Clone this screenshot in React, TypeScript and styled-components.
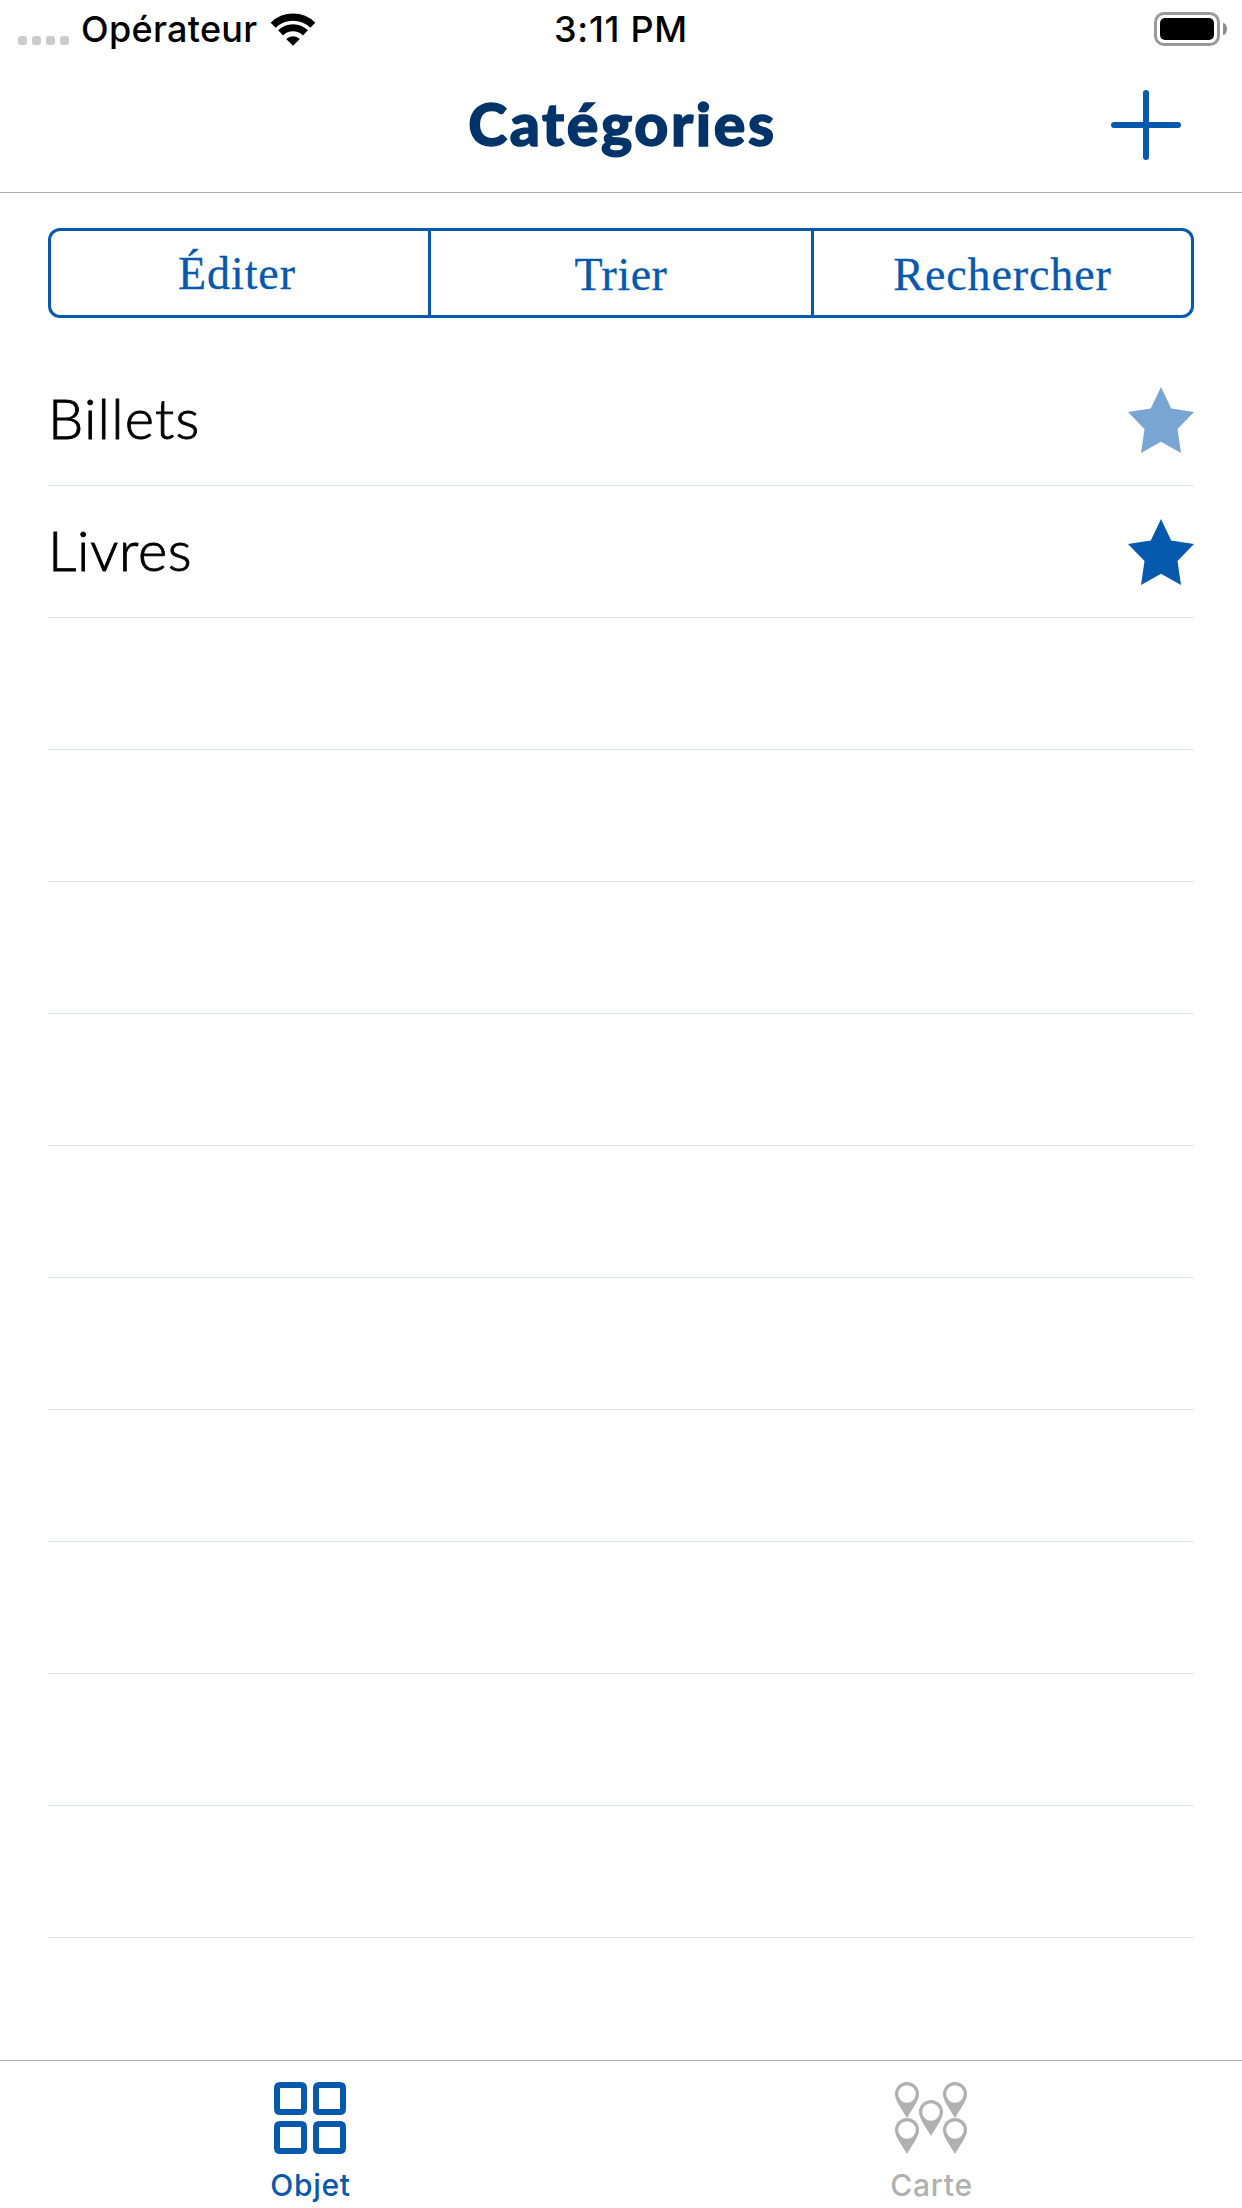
import React from "react";
import styled, { createGlobalStyle } from "styled-components";

const BLUE = "#0759ad";
const NAVY = "#023469";
const GREY = "#b0b0b0";

const GlobalStyle = createGlobalStyle`
  * { box-sizing: border-box; }
  body { margin: 0; background: #fff; }
`;

const Screen = styled.div`
  display: flex;
  flex-direction: column;
  width: 1242px;
  height: 2208px;
  overflow: hidden;
  background: #fff;
  font-family: Inter, "Liberation Sans", sans-serif;
`;

const StatusBar = styled.div`
  display: grid;
  grid-template-columns: 1fr auto 1fr;
  height: 60px;
  padding: 0 18px;
  color: #000;
  font-size: 36px;
  font-weight: 450;
  line-height: 59px;
`;

const Carrier = styled.div`
  display: flex;
`;

const Signal = styled.div`
  display: flex;
  gap: 5px;
  padding-top: 36px;
  margin-right: 12px;
`;

const SignalDot = styled.span`
  width: 9px;
  height: 9px;
  border-radius: 3px;
  background: #cbcbcb;
`;

const CarrierName = styled.span`
  width: 188px;
  letter-spacing: 0.3px;
`;

const Clock = styled.span`
  letter-spacing: 0.7px;
`;

const Power = styled.div`
  display: flex;
  justify-content: flex-end;
  padding-top: 12px;
  margin-right: -3px;
`;

const Battery = styled.div`
  width: 66px;
  height: 34px;
  padding: 3px;
  border: 3px solid #999;
  border-radius: 10px;
`;

const Charge = styled.div`
  height: 22px;
  border-radius: 5px;
  background: #000;
`;

const Terminal = styled.div`
  width: 4px;
  height: 12px;
  margin: 11px 0 0 3px;
  border-radius: 0 4px 4px 0 / 0 6px 6px 0;
  background: #8e8e8e;
`;

const NavBar = styled.header`
  display: grid;
  grid-template-columns: 1fr auto 1fr;
  height: 133px;
  padding: 0 61px;
  border-bottom: 1px solid #aaa;
`;

const Title = styled.h1`
  grid-column: 2;
  margin: 0 -3px 0 0;
  color: ${NAVY};
  font-family: Lato, "Liberation Sans", sans-serif;
  font-size: 59px;
  font-weight: 900;
  line-height: 127px;
  letter-spacing: 2.6px;
  -webkit-text-stroke: 1.4px ${NAVY};
  white-space: nowrap;
`;

const AddButton = styled.button`
  justify-self: end;
  width: 70px;
  height: 70px;
  margin-top: 30px;
  padding: 0;
  border: 0;
  background: none;
`;

const Glyph = styled.svg`
  display: block;
  flex: none;
`;

const Content = styled.main`
  display: flex;
  flex-direction: column;
  height: 1867px;
  padding: 35px 48px 0;
`;

const Segments = styled.div`
  display: grid;
  grid-template-columns: 383px 383px 1fr;
  height: 90px;
  box-shadow: inset 0 0 0 3px ${BLUE};
  border-radius: 12px;
`;

const Segment = styled.button<{ $spacing: number; $drop: number; $end: number }>`
  padding: ${({ $drop }) => $drop}px ${({ $end }) => $end}px 0 0;
  border: 0;
  border-right: 3px solid ${BLUE};
  background: none;
  color: ${BLUE};
  font-family: "Liberation Serif", serif;
  font-size: 46px;
  line-height: 50px;
  letter-spacing: ${({ $spacing }) => $spacing}px;
  -webkit-text-stroke: 0.3px ${BLUE};
  &:last-child { border-right: 0; }
`;

const List = styled.ul`
  margin: 36px 0 0;
  padding: 0;
  list-style: none;
`;

const Row = styled.li`
  display: flex;
  align-items: flex-start;
  justify-content: space-between;
  height: 132px;
  border-bottom: 1px solid #dae6f2;
`;

const RowLabel = styled.span<{ $spacing: number }>`
  color: #000;
  font-family: Lato, "Liberation Sans", sans-serif;
  font-size: 56px;
  font-weight: 300;
  line-height: 128px;
  letter-spacing: ${({ $spacing }) => $spacing}px;
  -webkit-text-stroke: 0.9px #000;
`;

const StarGlyph = styled(Glyph)`
  margin-top: 33px;
`;

const TabBar = styled.nav`
  display: grid;
  grid-template-columns: 1fr 1fr;
  height: 148px;
  border-top: 1px solid #aaa;
`;

const Tab = styled.a`
  display: flex;
  flex-direction: column;
  align-items: center;
  gap: 12px;
  padding: 21px 1px 0 0;
`;

const TabLabel = styled.span<{ $color: string; $spacing: number }>`
  margin-left: 1px;
  color: ${({ $color }) => $color};
  font-size: 30px;
  font-weight: 450;
  line-height: 38px;
  letter-spacing: ${({ $spacing }) => $spacing}px;
`;

const WifiIcon = () => (
  <Glyph width="48" height="60" viewBox="0 0 48 60" fill="none" stroke="#000" strokeWidth="7.2">
    <path d="M4.2 25.2 A28.3 28.3 0 0 1 43.8 25.2" />
    <path d="M11.6 32.8 A17.8 17.8 0 0 1 36.4 32.8" />
    <path d="M24 45.8 L17.2 39 A9.7 9.7 0 0 1 30.8 39 Z" fill="#000" stroke="none" />
  </Glyph>
);

const Star = ({ color }: { color: string }) => (
  <StarGlyph width="66" height="66" viewBox="0 0 66 66" fill={color}>
    <path d="M33 0 L43.2 21.6 L66 25 L49.5 42 L53 66 L33 54.8 L13 66 L16.5 42 L0 25 L22.8 21.6 Z" />
  </StarGlyph>
);

const GridIcon = () => (
  <Glyph width="72" height="72" viewBox="0 0 72 72" fill={BLUE} fillRule="evenodd">
    {[[0, 0], [39, 0], [0, 39], [39, 39]].map(([x, y]) => (
      <path
        key={`${x}-${y}`}
        transform={`translate(${x} ${y})`}
        d="M6 0 H27 Q33 0 33 6 V27 Q33 33 27 33 H6 Q0 33 0 27 V6 Q0 0 6 0 Z M6 6 V27 H27 V6 Z"
      />
    ))}
  </Glyph>
);

const PinsIcon = () => (
  <Glyph width="72" height="72" viewBox="0 0 72 72" fill={GREY} fillRule="evenodd">
    {[[0, 0], [48, 0], [24, 18], [0, 36], [48, 36]].map(([x, y]) => (
      <path
        key={`${x}-${y}`}
        transform={`translate(${x} ${y})`}
        d="M12 0 A12 12 0 0 1 24 12 C24 19 17 27 12 36 C7 27 0 19 0 12 A12 12 0 0 1 12 0 Z M12 3.2 A8.8 8.8 0 1 0 12 20.8 A8.8 8.8 0 1 0 12 3.2 Z"
      />
    ))}
  </Glyph>
);

const rows = [
  { label: "Billets", star: "#78a5d2", spacing: 1.2 },
  { label: "Livres", star: BLUE, spacing: 0.7 },
  ...Array.from({ length: 10 }, () => ({ label: "", star: "", spacing: 0 })),
];

export default function App() {
  return (
    <Screen>
      <GlobalStyle />
      <StatusBar>
        <Carrier>
          <Signal>
            {[0, 1, 2, 3].map((dot) => <SignalDot key={dot} />)}
          </Signal>
          <CarrierName>Opérateur</CarrierName>
          <WifiIcon />
        </Carrier>
        <Clock>3:11 PM</Clock>
        <Power>
          <Battery><Charge /></Battery>
          <Terminal />
        </Power>
      </StatusBar>
      <NavBar>
        <Title>Catégories</Title>
        <AddButton aria-label="Ajouter">
          <Glyph width="70" height="70" viewBox="0 0 70 70" stroke={BLUE} strokeWidth="6" strokeLinecap="round">
            <path d="M35 3 V67 M3 35 H67" />
          </Glyph>
        </AddButton>
      </NavBar>
      <Content>
        <Segments>
          <Segment $spacing={0.9} $drop={2} $end={2}>Éditer</Segment>
          <Segment $spacing={0.5} $drop={4} $end={0}>Trier</Segment>
          <Segment $spacing={0.9} $drop={4} $end={3}>Rechercher</Segment>
        </Segments>
        <List>
          {rows.map(({ label, star, spacing }, index) => (
            <Row key={index}>
              <RowLabel $spacing={spacing}>{label}</RowLabel>
              {star && <Star color={star} />}
            </Row>
          ))}
        </List>
      </Content>
      <TabBar>
        <Tab>
          <GridIcon />
          <TabLabel $color={BLUE} $spacing={0.7}>Objet</TabLabel>
        </Tab>
        <Tab>
          <PinsIcon />
          <TabLabel $color={GREY} $spacing={0.8}>Carte</TabLabel>
        </Tab>
      </TabBar>
    </Screen>
  );
}
